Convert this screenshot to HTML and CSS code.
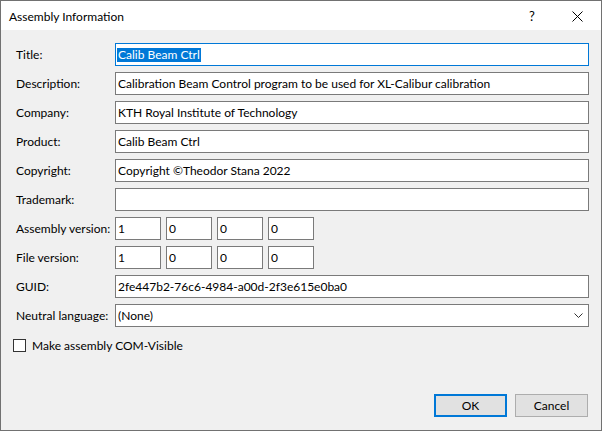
FILE: index.html
```html
<!DOCTYPE html>
<html lang="en">
<head>
<meta charset="utf-8">
<title>Assembly Information</title>
<link rel="stylesheet" href="styles.css">
</head>
<body>
<div class="window">
  <div class="titlebar">
    <span class="title">Assembly Information</span>
    <div class="tb-buttons">
      <span class="tb-btn help">?</span>
      <span class="tb-btn close"><svg width="11" height="11" viewBox="0 0 11 11"><path d="M0.5 0.5L10.5 10.5M10.5 0.5L0.5 10.5" stroke="#000" stroke-width="1" fill="none"/></svg></span>
    </div>
  </div>
  <div class="content">
    <div class="form">
      <span class="label">Title:</span>
      <div class="field focus"><span class="sel">Calib Beam Ctrl</span></div>

      <span class="label">Description:</span>
      <div class="field">Calibration Beam Control program to be used for XL-Calibur calibration</div>

      <span class="label">Company:</span>
      <div class="field">KTH Royal Institute of Technology</div>

      <span class="label">Product:</span>
      <div class="field">Calib Beam Ctrl</div>

      <span class="label">Copyright:</span>
      <div class="field">Copyright ©Theodor Stana 2022</div>

      <span class="label">Trademark:</span>
      <div class="field"></div>

      <span class="label">Assembly version:</span>
      <div class="versions">
        <div class="field">1</div>
        <div class="field">0</div>
        <div class="field">0</div>
        <div class="field">0</div>
      </div>

      <span class="label">File version:</span>
      <div class="versions">
        <div class="field">1</div>
        <div class="field">0</div>
        <div class="field">0</div>
        <div class="field">0</div>
      </div>

      <span class="label">GUID:</span>
      <div class="field">2fe447b2-76c6-4984-a00d-2f3e615e0ba0</div>

      <span class="label">Neutral language:</span>
      <div class="field combo">
        <span>(None)</span>
        <svg class="chev" width="9" height="5" viewBox="0 0 9 5"><path d="M0.5 0.5L4.5 4.5L8.5 0.5" stroke="#333" stroke-width="1" fill="none"/></svg>
      </div>
    </div>

    <div class="check">
      <span class="box"></span>
      <span class="check-text">Make assembly COM-Visible</span>
    </div>

    <div class="footer">
      <div class="btn default">OK</div>
      <div class="btn">Cancel</div>
    </div>
  </div>
</div>
</body>
</html>
```

FILE: styles.css
```css
html, body {
  margin: 0;
  padding: 0;
  background: #ffffff;
}

body {
  font-family: "Segoe UI", Lato, "Liberation Sans", sans-serif;
  font-size: 12px;
  color: #000;
}

.window {
  width: 602px;
  height: 431px;
  box-sizing: border-box;
  border: 1px solid #717171;
  display: flex;
  flex-direction: column;
  background: #f0f0f0;
}

.titlebar {
  height: 29px;
  flex: 0 0 29px;
  background: #ffffff;
  display: flex;
  align-items: stretch;
}

.title {
  flex: 1;
  padding-left: 8px;
  display: flex;
  align-items: center;
  padding-top: 1px;
}

.tb-buttons {
  display: flex;
}

.tb-btn {
  width: 46px;
  display: flex;
  align-items: center;
  justify-content: center;
}

.help {
  font-size: 13px;
  padding-top: 1px;
}

.close svg {
  display: block;
  margin-left: -2px;
  margin-top: 1px;
}

.content {
  flex: 1;
  display: flex;
  flex-direction: column;
  padding: 13px 12px 13px 15px;
}

.form {
  display: grid;
  grid-template-columns: 99px 1fr;
  grid-auto-rows: 23px;
  row-gap: 6px;
}

.label {
  display: flex;
  align-items: center;
  white-space: nowrap;
}

.field {
  box-sizing: border-box;
  height: 23px;
  background: #fff;
  border: 1px solid #7a7a7a;
  padding: 0 0 0 2px;
  display: flex;
  align-items: center;
  white-space: nowrap;
  overflow: hidden;
}

.field.focus {
  border-color: #0078d7;
  padding-left: 1px;
}

.sel {
  background: #0078d7;
  color: #fff;
  line-height: 14px;
  padding: 0 1px;
}

.versions {
  display: flex;
  gap: 5px;
}

.versions .field {
  width: 46px;
}

.combo {
  justify-content: space-between;
  padding-right: 5px;
}

.chev {
  display: block;
}

.check {
  display: flex;
  align-items: center;
  margin-top: 11px;
  margin-left: -3px;
  gap: 6px;
}

.box {
  width: 13px;
  height: 13px;
  box-sizing: border-box;
  border: 1px solid #333;
  background: #fff;
}

.footer {
  margin-top: auto;
  display: flex;
  justify-content: flex-end;
  gap: 8px;
  padding-right: 1px;
}

.btn {
  box-sizing: border-box;
  width: 73px;
  height: 23px;
  background: #e1e1e1;
  border: 1px solid #adadad;
  display: flex;
  align-items: center;
  justify-content: center;
}

.btn.default {
  border: 2px solid #0078d7;
}
```
